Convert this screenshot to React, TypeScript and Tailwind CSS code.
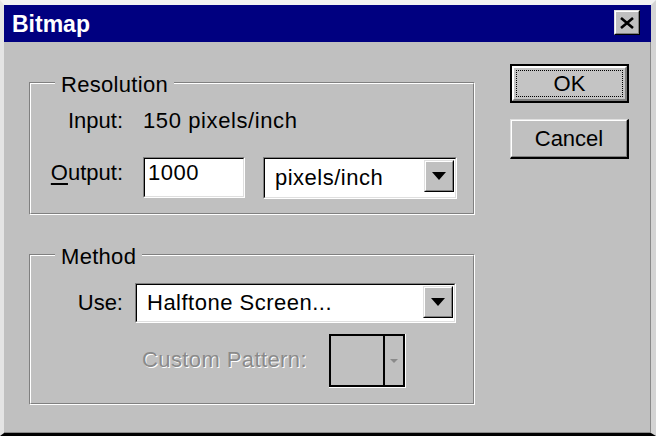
import React from "react";

const Raised = ({ className = "", children }: { className?: string; children?: React.ReactNode }) => (
  <div className={`border border-t-[#e0e0e0] border-l-[#e0e0e0] border-r-black border-b-black ${className}`}>
    <div className="w-full h-full border border-t-white border-l-white border-r-[#808080] border-b-[#808080] bg-[#c0c0c0] flex items-center justify-center">
      {children}
    </div>
  </div>
);

const Arrow = ({ color = "#000", w = 14, h = 8 }: { color?: string; w?: number; h?: number }) => (
  <svg width={w} height={h} viewBox={`0 0 ${w} ${h}`}>
    <polygon points={`0,0 ${w},0 ${w / 2},${h}`} fill={color} />
  </svg>
);

const Sunken = ({ className = "", inner = "", children }: { className?: string; inner?: string; children?: React.ReactNode }) => (
  <div className={`border border-t-[#808080] border-l-[#808080] border-r-white border-b-white ${className}`}>
    <div className={`w-full h-full border border-t-black border-l-black border-r-[#dfdfdf] border-b-[#dfdfdf] ${inner}`}>
      {children}
    </div>
  </div>
);

const Combo = ({ text, className }: { text: string; className: string }) => (
  <Sunken className={className} inner="bg-white flex items-start">
    <span className="flex-1 self-center pl-[10px] tracking-[0.5px]">{text}</span>
    <Raised className="mt-[1px] mr-[1px] w-[30px] h-[32px]">
      <Arrow />
    </Raised>
  </Sunken>
);

const Group = ({ label, className, children }: { label: string; className: string; children: React.ReactNode }) => (
  <div className="relative border border-t-[#808080] border-l-[#808080] border-r-white border-b-white">
    <div className={`border border-t-white border-l-white border-r-[#808080] border-b-[#808080] ${className}`}>
      {children}
    </div>
    <span className="absolute left-[25px] -top-[11px] bg-[#c0c0c0] px-[6px] tracking-[0.3px]">{label}</span>
  </div>
);

export default function App() {
  return (
    <div className="w-[656px] h-[436px] flex flex-col bg-[#c0c0c0] border-t-[5px] border-l-[4px] border-r-[5px] border-b-[3px] border-t-[#f2f2f2] border-l-[#e4e4e4] border-r-[#d4d4d4] border-b-black font-['Liberation_Sans',Arial,sans-serif] text-[22px] leading-[26px] text-black">
      {/* title bar */}
      <div className="h-[37px] shrink-0 bg-[#000080] flex items-start justify-between pl-[8px] pr-[11px]">
        <span className="mt-[6px] font-bold text-white text-[23px]">Bitmap</span>
        <Raised className="mt-[5px] w-[26px] h-[25px]">
          <svg width="14" height="12" viewBox="0 0 14 12">
            <path d="M1 1 L13 11 M13 1 L1 11" stroke="#000" strokeWidth="2.6" />
          </svg>
        </Raised>
      </div>

      <div className="flex-1 flex border-r border-b border-[#8a8a8a] pl-[25px]">
        <div className="w-[446px] flex flex-col pt-[40px]">
          <Group label="Resolution" className="pt-[24px] pb-[14px]">
            <div className="flex">
              <span className="w-[92px] text-right">Input:</span>
              <span className="ml-[20px] tracking-[0.6px]">150 pixels/inch</span>
            </div>
            <div className="flex items-start mt-[23px]">
              <span className="w-[92px] text-right mt-[3px]">
                <span className="underline underline-offset-[3px]">O</span>utput:
              </span>
              <Sunken className="ml-[20px] w-[102px] h-[41px]" inner="bg-white pl-[3px] pt-[1px] tracking-[0.5px]">
                1000
              </Sunken>
              <Combo text="pixels/inch" className="ml-[18px] w-[194px] h-[42px]" />
            </div>
          </Group>

          <div className="mt-[39px]">
            <Group label="Method" className="pt-[27px] pb-[15px]">
              <div className="flex items-center">
                <span className="w-[92px] text-right">Use:</span>
                <Combo text="Halftone Screen..." className="ml-[12px] w-[321px] h-[40px]" />
              </div>
              <div className="flex items-center mt-[11px] pl-[111px]">
                <span className="w-[166px] tracking-[0.4px] text-[#8a8a8a] [text-shadow:1px_1px_0_#ffffff] pb-[3px]">Custom Pattern:</span>
                <div className="ml-[21px] w-[77px] h-[54px] border-r border-b border-white">
                  <div className="w-full h-full border-2 border-black flex bg-[#c0c0c0]">
                    <div className="flex-1" />
                    <div className="w-[20px] border-l-2 border-black flex items-center justify-center">
                      <Arrow color="#8a8a8a" w={8} h={4} />
                    </div>
                  </div>
                </div>
              </div>
            </Group>
          </div>
        </div>

        <div className="ml-[35px] w-[119px] flex flex-col pt-[22px] gap-[16px]">
          <div className="h-[39px] border-2 border-black">
            <div className="w-full h-full border-2 border-t-white border-l-white border-r-[#808080] border-b-[#808080] bg-[#c4c4c4] p-[2px]">
              <div className="w-full h-full border border-dotted border-black flex items-center justify-center">
                OK
              </div>
            </div>
          </div>
          <Raised className="h-[40px] border-r-2 border-b-2">
            Cancel
          </Raised>
        </div>
      </div>
    </div>
  );
}
